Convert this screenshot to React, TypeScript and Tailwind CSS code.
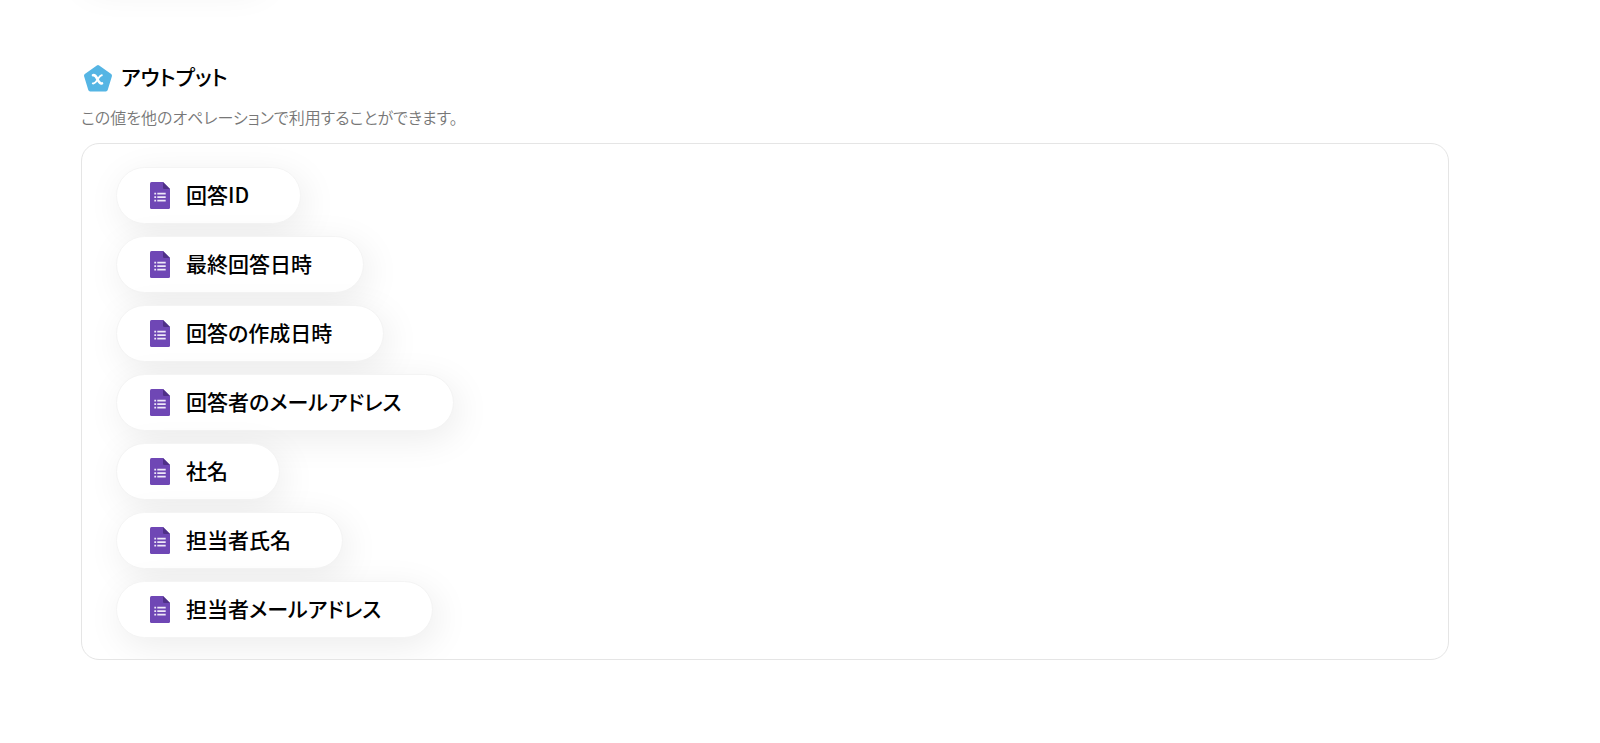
const items = ["回答ID", "最終回答日時", "回答の作成日時", "回答者のメールアドレス", "社名", "担当者氏名", "担当者メールアドレス"];

function FormIcon() {
  return (
    <svg className="shrink-0" width="20" height="27" viewBox="0 0 20 27" aria-hidden="true">
      <path d="M1.5 0H13L20 7V25.5Q20 27 18.5 27H1.5Q0 27 0 25.5V1.5Q0 0 1.5 0Z" fill="#6f47b5" />
      <path d="M13 0L20 7H14.3Q13 7 13 5.7Z" fill="#4f3087" />
      <path d="M4.3 10.8h1.8v1.8H4.3zM7.3 10.8h8.4v1.8H7.3zM4.3 14.3h1.8v1.8H4.3zM7.3 14.3h8.4v1.8H7.3zM4.3 17.8h1.8v1.8H4.3zM7.3 17.8h8.4v1.8H7.3z" fill="#eee8f8" />
    </svg>
  );
}

function OutputIcon() {
  return (
    <svg className="shrink-0" width="30" height="30" viewBox="0 0 30 30" aria-hidden="true">
      <path d="M15 4L27 12.7L22.8 26.5H7.2L3 12.7Z" fill="#55b5e4" stroke="#55b5e4" strokeWidth="4" strokeLinejoin="round" />
      <path d="M10 12.2C12.6 11.6 13.2 13.6 14.6 16.5S17 21.2 19 20.4" fill="none" stroke="#fff" strokeWidth="2.6" strokeLinecap="round" />
      <path d="M18.8 12.2C17 12 16 14.4 14.6 16.5S11.6 21 9.8 20.4" fill="none" stroke="#fff" strokeWidth="1.9" strokeLinecap="round" />
    </svg>
  );
}

export default function App() {
  return (
    <main className="min-h-screen overflow-hidden bg-white pr-[151px] pl-[81px] font-['Noto_Sans_CJK_JP',sans-serif] text-black [font-feature-settings:'palt']">
      <div className="-mt-12 mb-[62px] h-7 w-[180px] rounded-full shadow-[4px_8px_36px_rgba(0,0,0,0.08)]" />
      <div className="h-5" />
      <h2 className="flex h-8 items-center gap-2 pl-0.5 text-[21px] font-medium"><OutputIcon /><span className="pb-0.5">アウトプット</span></h2>
      <p className="mt-2 h-[41px] pt-[3px] text-[16px] leading-6 font-[350] text-[#777]">この値を他のオペレーションで利用することができます。</p>
      <ul className="flex flex-col items-start gap-3 overflow-hidden rounded-[18px] border border-[#e5e5e5] px-[34px] pt-[23px] pb-[21px]">
        {items.map((item) => (
          <li key={item} className="flex h-[57px] items-center gap-4 rounded-full border border-[#f4f4f4] bg-white pr-[51px] pl-[33px] text-[21px] leading-7 font-medium shadow-[4px_8px_36px_rgba(0,0,0,0.08)]">
            <FormIcon /><span className="pb-1">{item}</span>
          </li>
        ))}
      </ul>
    </main>
  );
}
